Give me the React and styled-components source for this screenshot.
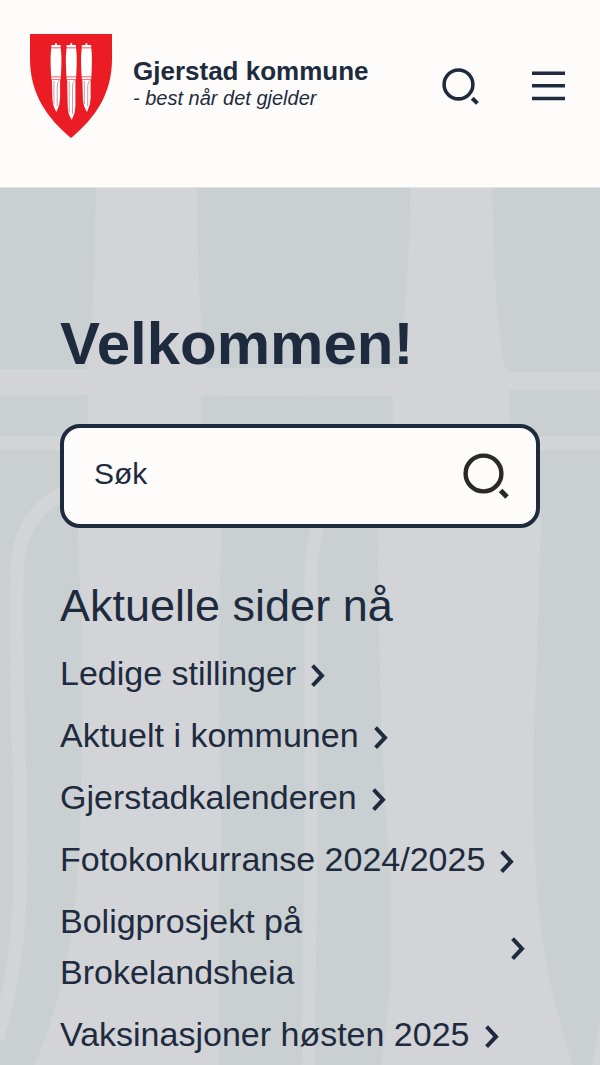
import React from 'react'
import styled, { createGlobalStyle } from 'styled-components'

const colors = {
  ink: '#1e2b3e',
  paper: '#fdfcfa',
  heroDark: '#cacfd2',
  heroLight: '#d2d4d8',
  crest: '#ec1c24'
}

const pages = [
  'Ledige stillinger',
  'Aktuelt i kommunen',
  'Gjerstadkalenderen',
  'Fotokonkurranse 2024/2025',
  'Boligprosjekt på Brokelandsheia',
  'Vaksinasjoner høsten 2025'
]

function Knife ({ x, length }) {
  return <g transform={`translate(${x} 0)`}>
    <path fill='#fff' d='M0.8 11H10.2V13.4H0.8ZM4.6 9.2H6.4V11H4.6Z' />
    <path fill='#fff' d='M0.7 14.2H10.3Q11.2 22 10.9 30L10.4 42.4H0.6L0.1 30Q-0.2 22 0.7 14.2Z' />
    <path fill='#fff' d='M0.8 43.2H10.2V45.4H0.8Z' />
    <path
      fill='#fff'
      d={`M1.4 46H9.6V${length - 14}Q9.6 ${length - 7} 6 ${length}Q2 ${length - 6} 1.9 ${length - 14}Z`}
    />
    <path
      fill='none'
      stroke='#a8595c'
      strokeWidth='0.6'
      d={`M8.6 46.4Q6.6 49 6.7 53V${length - 6}M3.4 47V${length - 8}`}
    />
  </g>
}

function Crest () {
  return <CrestSvg viewBox='0 0 82 104' aria-hidden='true'>
    <path fill={colors.crest} d='M0 0H82V25C82 60 65 84 41 104C17 84 0 60 0 25Z' />
    <Knife x={20.5} length={78} />
    <Knife x={35.8} length={86} />
    <Knife x={51} length={78} />
  </CrestSvg>
}

function SearchIcon ({ size, color }) {
  return <svg width={size} height={size} viewBox='0 0 46 46' fill='none' stroke={color} strokeWidth='4.4' aria-hidden='true'>
    <circle cx='20.5' cy='20.5' r='17.9' />
    <path d='M37.6 37.6L44 44' strokeWidth='5' />
  </svg>
}

function MenuIcon () {
  return <svg width='33' height='30' viewBox='0 0 33 30' stroke={colors.ink} strokeWidth='3.4' aria-hidden='true'>
    <path d='M0 2.3H33M0 14.8H33M0 27.5H33' />
  </svg>
}

function Chevron () {
  return <ChevronSvg viewBox='0 0 14 28' aria-hidden='true'>
    <path d='M1.6 5.7L11 15.7L1.6 25.7' />
  </ChevronSvg>
}

// Enlarged knives from the coat of arms
function Pattern () {
  return <PatternSvg viewBox='0 0 600 878' preserveAspectRatio='xMidYMin slice' aria-hidden='true'>
    <path d='M96 0Q95 120 87 181H88V250H201V211Q201 207 206 207L393 208V250H512L508 202H600V183H510Q505 183 504 178Q493 110 492 0H410Q409 100 399 180H209Q206 180 205 175Q198 120 197 0Z' />
    <path d='M0 181H92V207H0Z' />
    <path d='M0 248H600V262H0Z' />
    <path d='M78 330Q78 380 82 412V500C82 680 80 770 34 878H219V700Q223 660 221 600Q217 450 222 330Z' />
    <path d='M377 330L380 490Q383 600 390 680V800Q386 840 381 878H573C552 810 536 750 534 640Q531 580 536 490L541 330Z' />
    <path d='M600 828Q596 860 591 878H600Z' />
    <path className='edge' strokeWidth='14' d='M86 300C42 304 17 340 17 390C15 490 21 580 21 660C21 750 12 800 -3 850' />
    <path className='edge' strokeWidth='13' d='M340 300Q311 330 311 390V660Q309 780 308 890' />
  </PatternSvg>
}

export default function App () {
  return <>
    <GlobalStyle />
    <Header>
      <Brand href='#'>
        <Crest />
        <BrandText>
          <BrandName>Gjerstad kommune</BrandName>
          <BrandSlogan>- best når det gjelder</BrandSlogan>
        </BrandText>
      </Brand>
      <Tools>
        <IconButton type='button' aria-label='Søk'>
          <SearchIcon size={37} color={colors.ink} />
        </IconButton>
        <IconButton type='button' aria-label='Meny'>
          <MenuIcon />
        </IconButton>
      </Tools>
    </Header>
    <Hero>
      <Pattern />
      <Content>
        <Title>Velkommen!</Title>
        <SearchForm role='search' onSubmit={e => e.preventDefault()}>
          <SearchInput type='text' placeholder='Søk' aria-label='Søk' />
          <IconButton type='submit' aria-label='Søk'>
            <SearchIcon size={46} color='#2b2926' />
          </IconButton>
        </SearchForm>
        <Subtitle>Aktuelle sider nå</Subtitle>
        <PageList>
          {pages.map(name => <li key={name}>
            <PageLink href='#'>
              <span>{name}</span>
              <Chevron />
            </PageLink>
          </li>)}
        </PageList>
      </Content>
    </Hero>
  </>
}

const GlobalStyle = createGlobalStyle`
  * {
    box-sizing: border-box;
  }
  body {
    margin: 0;
    background: ${colors.paper};
    color: ${colors.ink};
    font-family: "Liberation Sans", Arial, sans-serif;
  }
`

const Header = styled.header`
  display: flex;
  align-items: center;
  justify-content: space-between;
  padding: 34px 35px 49px 30px;
  border-bottom: 1px solid #e4e4e4;
  background: ${colors.paper};
`

const Brand = styled.a`
  display: flex;
  align-items: center;
  gap: 21px;
  color: inherit;
  text-decoration: none;
`

const CrestSvg = styled.svg`
  width: 82px;
  height: 104px;
  flex: none;
`

const BrandText = styled.span`
  display: flex;
  flex-direction: column;
  padding-bottom: 6px;
`

const BrandName = styled.strong`
  font-size: 26px;
  line-height: 30px;
`

const BrandSlogan = styled.em`
  font-size: 20px;
  line-height: 24px;
`

const Tools = styled.div`
  display: flex;
  align-items: center;
  gap: 53px;
`

const IconButton = styled.button`
  display: flex;
  flex: none;
  padding: 0;
  border: 0;
  background: none;
  cursor: pointer;
`

const Hero = styled.main`
  position: relative;
  overflow: hidden;
  padding: 120px 60px 7px;
  background: ${colors.heroDark};
`

const PatternSvg = styled.svg`
  position: absolute;
  inset: 0;
  width: 100%;
  height: 100%;
  fill: ${colors.heroLight};
  .edge {
    fill: none;
    stroke: ${colors.heroLight};
  }
`

const Content = styled.div`
  position: relative;
`

const Title = styled.h1`
  margin: 0 0 44px;
  font-size: 60px;
  line-height: 72px;
`

const SearchForm = styled.form`
  display: flex;
  align-items: center;
  height: 104px;
  padding: 0 27px 0 30px;
  border: 4px solid ${colors.ink};
  border-radius: 20px;
  background: ${colors.paper};
`

const SearchInput = styled.input`
  flex: 1;
  min-width: 0;
  padding: 0 0 4px;
  border: 0;
  outline: 0;
  background: none;
  color: ${colors.ink};
  font: inherit;
  font-size: 30px;
  &::placeholder {
    color: ${colors.ink};
    opacity: 1;
  }
`

const Subtitle = styled.h2`
  margin: 51px 0 15px;
  font-size: 45px;
  font-weight: 400;
  line-height: 54px;
`

const PageList = styled.ul`
  display: flex;
  flex-direction: column;
  gap: 11px;
  margin: 0;
  padding: 0;
  list-style: none;
`

const PageLink = styled.a`
  display: inline-flex;
  align-items: center;
  gap: 15px;
  padding-right: 15px;
  color: inherit;
  font-size: 34px;
  line-height: 51px;
  text-decoration: none;
  vertical-align: top;
`

const ChevronSvg = styled.svg`
  flex: none;
  width: 14px;
  height: 28px;
  fill: none;
  stroke: ${colors.ink};
  stroke-width: 4;
`
